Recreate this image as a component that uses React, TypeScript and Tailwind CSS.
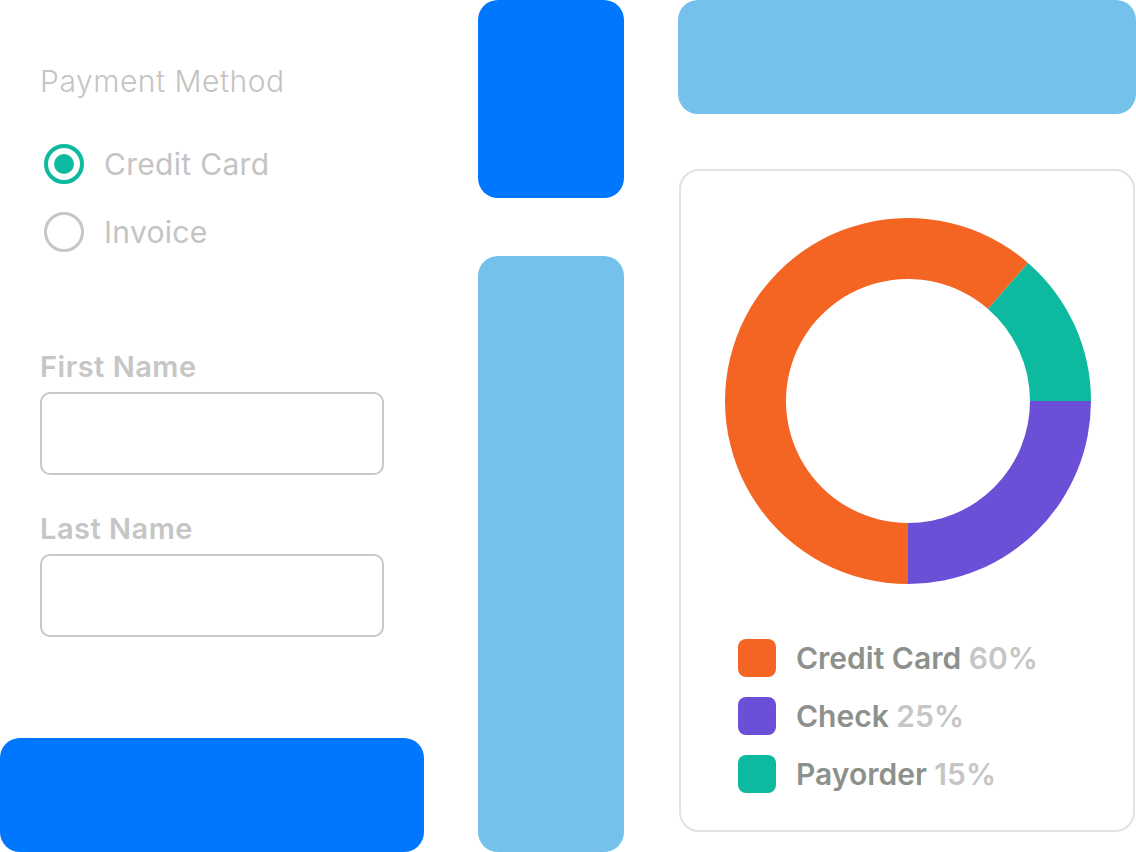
import React from "react";

const CX = 183;
const CY = 183;
const R_OUT = 183;
const R_IN = 122;

function pt(angle: number, r: number) {
    const a = (angle * Math.PI) / 180;
    return [CX + r * Math.sin(a), CY - r * Math.cos(a)];
}

// annulus sector, angles in degrees clockwise from top
function sector(from: number, to: number) {
    const large = to - from > 180 ? 1 : 0;
    const [x1, y1] = pt(from, R_OUT);
    const [x2, y2] = pt(to, R_OUT);
    const [x3, y3] = pt(to, R_IN);
    const [x4, y4] = pt(from, R_IN);
    return `M${x1} ${y1} A${R_OUT} ${R_OUT} 0 ${large} 1 ${x2} ${y2} L${x3} ${y3} A${R_IN} ${R_IN} 0 ${large} 0 ${x4} ${y4} Z`;
}

const slices = [
    { from: 180, to: 401, color: "#f46524" },
    { from: 41, to: 90, color: "#0dba9f" },
    { from: 90, to: 180, color: "#6b4fd6" },
];

const legend = [
    { label: "Credit Card", value: "60%", color: "bg-[#f46524]" },
    { label: "Check", value: "25%", color: "bg-[#6b4fd6]" },
    { label: "Payorder", value: "15%", color: "bg-[#0dba9f]" },
];

function Radio({ label, checked }: { label: string; checked?: boolean }) {
    return (
        <div className="flex items-center h-[40px] gap-[20px] pl-[4px]">
            {checked ? (
                <div className="w-[40px] h-[40px] rounded-full border-[4.5px] border-[#0dba9f] flex items-center justify-center">
                    <div className="w-[20px] h-[20px] rounded-full bg-[#0dba9f]" />
                </div>
            ) : (
                <div className="w-[40px] h-[40px] rounded-full border-[3.5px] border-[#c6c6c6]" />
            )}
            <span className="text-[30px] tracking-[0.3px] text-[#c4c4c4]">{label}</span>
        </div>
    );
}

function Field({ label, top }: { label: string; top: string }) {
    return (
        <div className={`flex flex-col ${top}`}>
            <div className="h-[38px] flex items-center text-[29px] font-semibold tracking-[0.5px] text-[#c6c6c6]">
                {label}
            </div>
            <div className="mt-[6px] w-[344px] h-[83px] rounded-[10px] border-2 border-[#c8c8c8]" />
        </div>
    );
}

export default function App() {
    return (
        <div
            className="w-[1136px] h-[852px] bg-white flex overflow-hidden"
            style={{ fontFamily: "Inter, 'Noto Sans', sans-serif" }}
        >
            {/* Form column */}
            <div className="w-[424px] h-full flex flex-col justify-between">
                <div className="flex flex-col pl-[40px]">
                    <div className="mt-[62px] h-[38px] flex items-center text-[30px] font-light tracking-[0.55px] text-[#c4c4c4]">
                        Payment Method
                    </div>
                    <div className="mt-[44px] flex flex-col gap-[28px]">
                        <Radio label="Credit Card" checked />
                        <Radio label="Invoice" />
                    </div>
                    <Field label="First Name" top="mt-[96px]" />
                    <Field label="Last Name" top="mt-[35px]" />
                </div>
                <div className="h-[114px] w-full rounded-[20px] bg-[#0077ff]" />
            </div>

            {/* Middle column */}
            <div className="ml-[54px] w-[146px] h-full flex flex-col gap-[58px]">
                <div className="h-[198px] rounded-[20px] bg-[#0077ff]" />
                <div className="flex-1 rounded-[20px] bg-[#74c1eb]" />
            </div>

            {/* Chart column */}
            <div className="ml-[54px] w-[458px] h-full flex flex-col">
                <div className="h-[114px] rounded-[20px] bg-[#74c1eb]" />
                <div className="mt-[55px] mx-px h-[663px] rounded-[20px] border-2 border-[#e2e2e2] flex flex-col items-center pt-[47px]">
                    <svg width="366" height="366" viewBox="0 0 366 366" className="ml-[2px]">
                        {slices.map((s) => (
                            <path key={s.color} d={sector(s.from, s.to)} fill={s.color} />
                        ))}
                    </svg>
                    <div className="self-start ml-[57px] mt-[55px] flex flex-col gap-[20px]">
                        {legend.map((l) => (
                            <div key={l.label} className="flex items-center gap-[20px] h-[38px]">
                                <div className={`w-[38px] h-[38px] rounded-[8px] ${l.color}`} />
                                <span className="text-[30px] leading-[38px] font-semibold text-[#8d918c]">
                                    {l.label} <span className="text-[#c6c6c6]">{l.value}</span>
                                </span>
                            </div>
                        ))}
                    </div>
                </div>
            </div>
        </div>
    );
}
